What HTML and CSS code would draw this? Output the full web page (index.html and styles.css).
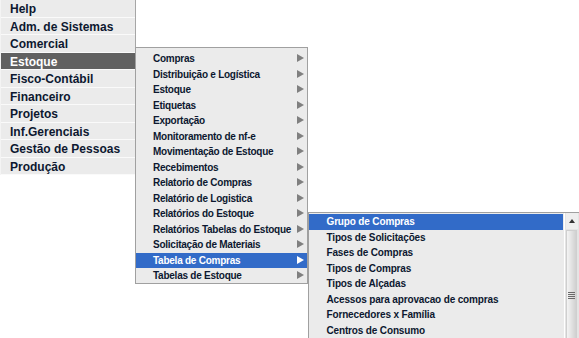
FILE: index.html
```html
<!DOCTYPE html>
<html>
<head>
<meta charset="utf-8">
<link rel="stylesheet" href="styles.css">
</head>
<body>
<div class="menubar">
  <ul class="main">
    <li>Help</li>
    <li>Adm. de Sistemas</li>
    <li>Comercial</li>
    <li class="active">Estoque</li>
    <li>Fisco-Contábil</li>
    <li>Financeiro</li>
    <li>Projetos</li>
    <li>Inf.Gerenciais</li>
    <li>Gestão de Pessoas</li>
    <li>Produção</li>
  </ul>

  <ul class="sub sub1">
    <li>Compras<span class="arrow"></span></li>
    <li>Distribuição e Logística<span class="arrow"></span></li>
    <li>Estoque<span class="arrow"></span></li>
    <li>Etiquetas<span class="arrow"></span></li>
    <li>Exportação<span class="arrow"></span></li>
    <li>Monitoramento de nf-e<span class="arrow"></span></li>
    <li>Movimentação de Estoque<span class="arrow"></span></li>
    <li>Recebimentos<span class="arrow"></span></li>
    <li>Relatorio de Compras<span class="arrow"></span></li>
    <li>Relatório de Logistica<span class="arrow"></span></li>
    <li>Relatórios do Estoque<span class="arrow"></span></li>
    <li>Relatórios Tabelas do Estoque<span class="arrow"></span></li>
    <li>Solicitação de Materiais<span class="arrow"></span></li>
    <li class="active">Tabela de Compras<span class="arrow"></span></li>
    <li>Tabelas de Estoque<span class="arrow"></span></li>
  </ul>

  <div class="sub2">
    <ul class="list">
      <li class="active">Grupo de Compras</li>
      <li>Tipos de Solicitações</li>
      <li>Fases de Compras</li>
      <li>Tipos de Compras</li>
      <li>Tipos de Alçadas</li>
      <li>Acessos para aprovacao de compras</li>
      <li>Fornecedores x Família</li>
      <li>Centros de Consumo</li>
    </ul>
    <div class="scrollbar">
      <div class="btn-up"><span class="up-tri"></span></div>
      <div class="thumb">
        <div class="grip"><i></i><i></i><i></i><i></i></div>
      </div>
    </div>
  </div>
</div>
</body>
</html>
```

FILE: styles.css
```css
html, body {
  margin: 0;
  padding: 0;
  background: #ffffff;
  overflow: hidden;
}
body {
  width: 579px;
  height: 338px;
  font-family: "Liberation Sans", Arial, sans-serif;
  font-weight: bold;
  color: #0d1830;
}
ul {
  list-style: none;
  margin: 0;
  padding: 0;
}
.menubar {
  position: relative;
  width: 579px;
  height: 338px;
}

/* main menu */
.main {
  width: 136px;
  box-sizing: border-box;
  border-right: 1px solid #a6a6a6;
  border-left: 1px solid #f4f4f4;
  background: #ebebeb;
}
.main li {
  height: 17.5px;
  box-sizing: border-box;
  border-bottom: 1px solid #fafafa;
  padding-left: 9px;
  font-size: 12px;
  line-height: 18px;
  white-space: nowrap;
  overflow: hidden;
}
.main li.active {
  background: #616161;
  color: #ffffff;
}

/* first submenu */
.sub1 {
  position: absolute;
  left: 135px;
  top: 47px;
  width: 173px;
  box-sizing: border-box;
  border: 1px solid #a0a0a0;
  background: #ebebeb;
  padding: 3px 0 0;
  height: 237px;
}
.sub1 li {
  position: relative;
  height: 15.5px;
  padding-left: 17px;
  font-size: 10px;
  letter-spacing: -0.25px;
  line-height: 15px;
  white-space: nowrap;
}
.sub1 li.active {
  background: #326bc8;
  color: #ffffff;
}
.arrow {
  position: absolute;
  right: 3px;
  top: 3px;
  width: 0;
  height: 0;
  border-top: 4.5px solid transparent;
  border-bottom: 4.5px solid transparent;
  border-left: 7px solid #7f7f7f;
}
.sub1 li.active .arrow {
  border-left-color: #ffffff;
}

/* second submenu (scrollable list) */
.sub2 {
  position: absolute;
  left: 308px;
  top: 212px;
  width: 280px;
  height: 140px;
  box-sizing: border-box;
  border: 1px solid #a0a0a0;
  background: #ebebeb;
  display: flex;
  padding-top: 1px;
}
.sub2 .list {
  width: 254px;
  flex: none;
}
.sub2 .list li {
  height: 15.5px;
  padding-left: 17.5px;
  font-size: 10px;
  letter-spacing: -0.15px;
  line-height: 15px;
  white-space: nowrap;
}
.sub2 .list li.active {
  background: #326bc8;
  color: #ffffff;
}
.scrollbar {
  margin-left: 1px;
  border-left: 1px solid #ffffff;
  padding-left: 1px;
  width: 14px;
  flex: none;
  display: flex;
  flex-direction: column;
  margin-top: -1px;
  background: #e4e4e4;
}
.btn-up {
  height: 16px;
  width: 12px;
  display: flex;
  align-items: center;
  justify-content: center;
  background: #eeeeee;
}
.up-tri {
  width: 0;
  height: 0;
  border-left: 3px solid transparent;
  border-right: 3px solid transparent;
  border-bottom: 4px solid #333333;
}
.thumb {
  width: 11px;
  flex: 1;
  margin-top: 1px;
  box-sizing: border-box;
  border: 1px solid #cfcfcf;
  background: linear-gradient(to right, #f4f4f4, #e2e2e2 50%, #d0d0d0);
  display: flex;
  flex-direction: column;
  align-items: center;
  padding-top: 61px;
}
.grip {
  display: flex;
  flex-direction: column;
  gap: 1px;
}
.grip i {
  display: block;
  width: 7px;
  height: 1px;
  background: #6a6a6a;
}
```
